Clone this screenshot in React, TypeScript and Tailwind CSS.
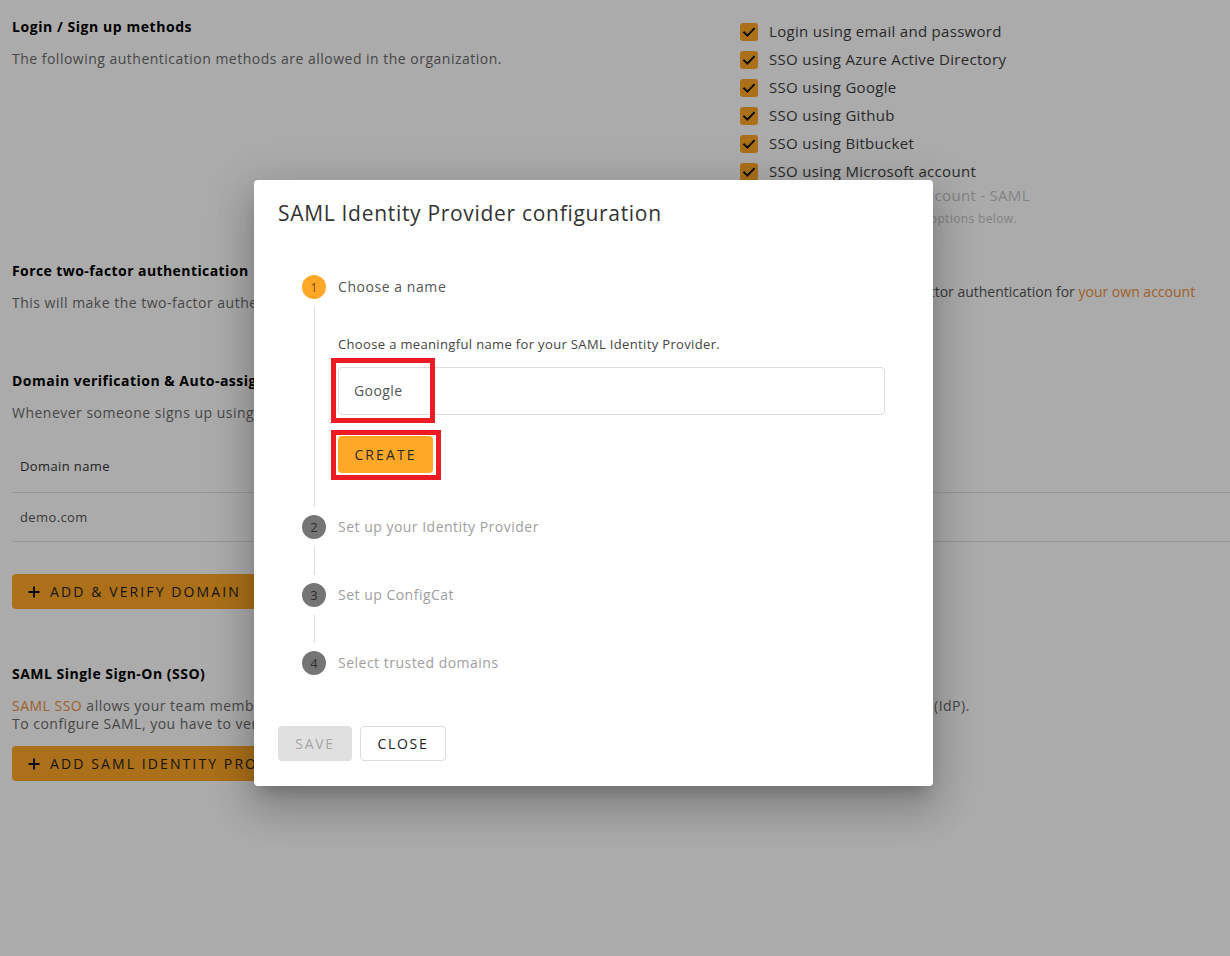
import React from "react";

const Check = () => (
  <span className="flex h-[18px] w-[18px] shrink-0 items-center justify-center rounded-[3px] bg-[#ffa726]">
    <svg viewBox="0 0 18 18" className="h-[18px] w-[18px]" fill="none">
      <path d="M4.2 9.4l3.2 3.2L13.9 5.8" stroke="#111" strokeWidth="2" strokeLinecap="square" />
    </svg>
  </span>
);

const Plus = () => (
  <svg viewBox="0 0 12 12" className="h-3 w-3" fill="none">
    <path d="M6 0.5v11M0.5 6h11" stroke="#111" strokeWidth="2" />
  </svg>
);

const methods = [
  "Login using email and password",
  "SSO using Azure Active Directory",
  "SSO using Google",
  "SSO using Github",
  "SSO using Bitbucket",
  "SSO using Microsoft account",
];

const StepCircle = ({ n, active }: { n: number; active?: boolean }) => (
  <span
    className={
      active
        ? "flex h-6 w-6 shrink-0 items-center justify-center rounded-full bg-[#ffa726] text-[13px] text-[#7a5012]"
        : "flex h-6 w-6 shrink-0 items-center justify-center rounded-full bg-[#757575] text-[13px] text-[#2e2e2e]"
    }
  >
    {n}
  </span>
);

export default function App() {
  return (
    <div className="relative min-h-[956px] w-full overflow-hidden bg-white font-['Open_Sans',sans-serif] text-sm">
      <div className="pl-3">
        {/* Section 1 */}
        <div className="flex">
          <div className="w-[728px] shrink-0 pt-[17px]">
            <h3 className="text-sm font-bold leading-5 tracking-[0.04em] text-black">Login / Sign up methods</h3>
            <p className="mt-3 leading-5 tracking-[0.035em] text-[#6b6b6b]">
              The following authentication methods are allowed in the organization.
            </p>
          </div>
          <div className="flex-1 pt-[18px]">
            {methods.map((m) => (
              <div key={m} className="flex h-7 items-center gap-[11px]">
                <Check />
                <span className="text-[15px] tracking-[0.02em] text-[#3d3d3d]">{m}</span>
              </div>
            ))}
            <div className="flex h-5 items-center gap-[11px]">
              <span className="h-[18px] w-[18px] shrink-0 rounded-[3px] border-2 border-[#c4c4c4]" />
              <span className="text-[15px] tracking-[0.02em] text-[#c4c4c4]">SSO using Microsoft account - SAML</span>
            </div>
            <p className="mt-[5px] text-xs leading-4 tracking-[0.03em] text-[#c4c4c4]">
              You can set it up with the SAML options below.
            </p>
          </div>
        </div>

        {/* Section 2 */}
        <div className="mt-[34px] flex">
          <div className="w-[728px] shrink-0">
            <h3 className="text-sm font-bold leading-5 tracking-[0.03em] text-black">Force two-factor authentication</h3>
            <p className="mt-3 leading-5 tracking-[0.035em] text-[#6b6b6b]">
              This will make the two-factor authentication mandatory for every member.
            </p>
          </div>
          <div className="flex-1 pt-[21px]">
            <p className="text-sm leading-5 text-[#555]">
              Don&apos;t forget to enable two-factor authentication for{" "}
              <span className="text-[#ee8f3e]">your own account</span>
            </p>
          </div>
        </div>

        {/* Section 3 */}
        <div className="mt-[58px]">
          <h3 className="text-sm font-bold leading-5 tracking-[0.035em] text-black">
            Domain verification &amp; Auto-assign users
          </h3>
          <p className="mt-3 leading-5 tracking-[0.035em] text-[#6b6b6b]">
            Whenever someone signs up using a verified domain, they will be added to the organization automatically.
          </p>
          <div className="mt-[18px]">
            <div className="flex h-[52px] items-center border-b border-[#e0e0e0] px-2 text-[13px] tracking-[0.03em] text-[#333]">
              Domain name
            </div>
            <div className="flex h-[49px] items-center border-b border-[#e0e0e0] px-2 text-[13px] tracking-[0.03em] text-[#555]">
              demo.com
            </div>
          </div>
          <button className="mt-8 inline-flex h-[35px] items-center gap-[10px] rounded-[4px] bg-[#ffa726] pl-4 pr-4 text-sm tracking-[0.15em] text-[#222]">
            <Plus />
            ADD &amp; VERIFY DOMAIN
          </button>
        </div>

        {/* Section 4 */}
        <div className="mt-[55px]">
          <h3 className="text-sm font-bold leading-5 tracking-[0.035em] text-black">SAML Single Sign-On (SSO)</h3>
          <p className="mt-[13px] leading-[18px] tracking-[0.035em] text-[#6b6b6b]">
            <span className="text-[#ee8f3e]">SAML SSO</span> allows your team members to log in to ConfigCat using a
            single set of credentials managed by your own Identity Provider (IdP).
            <br />
            To configure SAML, you have to verify at least one domain first.
          </p>
          <button className="mt-[13px] inline-flex h-[35px] items-center gap-[10px] rounded-[4px] bg-[#ffa726] pl-4 pr-4 text-sm tracking-[0.15em] text-[#222]">
            <Plus />
            ADD SAML IDENTITY PROVIDER
          </button>
        </div>
      </div>

      {/* Overlay */}
      <div className="absolute inset-0 bg-[rgba(0,0,0,0.33)]" />

      {/* Modal */}
      <div className="absolute left-[254px] top-[180px] w-[679px] rounded-[4px] bg-white px-6 pb-[25px] pt-[19px] shadow-[0_11px_15px_-7px_rgba(0,0,0,0.2),0_24px_38px_3px_rgba(0,0,0,0.14),0_9px_46px_8px_rgba(0,0,0,0.12)]">
        <h2 className="text-[21px] font-normal leading-7 tracking-[0.033em] text-[#333]">
          SAML Identity Provider configuration
        </h2>

        <div className="mt-12 px-6">
          {/* Step 1 */}
          <div className="flex h-6 items-center gap-3">
            <StepCircle n={1} active />
            <span className="text-sm tracking-[0.04em] text-[#555]">Choose a name</span>
          </div>
          <div className="ml-3 mt-2 border-l border-[#dcdcdc] pb-[34px] pl-[23px] pt-[28px]">
            <p className="text-[13px] leading-[18px] tracking-[0.027em] text-[#444]">
              Choose a meaningful name for your SAML Identity Provider.
            </p>
            <div className="relative mt-[14px]">
              <div className="flex h-12 items-center rounded-[4px] border border-[#dcdcdc] pl-[15px] text-sm tracking-[0.03em] text-[#555]">
                Google
              </div>
              <div className="absolute -left-[7px] -top-[9px] h-[65px] w-[104px] border-[5px] border-[#ed1c24]" />
            </div>
            <div className="relative mt-[21px] h-[37px] w-[95px]">
              <button className="flex h-[37px] w-[95px] items-center justify-center rounded-[4px] bg-[#ffa726] text-sm tracking-[0.15em] text-[#2a2a2a]">
                CREATE
              </button>
              <div className="absolute -left-[7px] -top-[6px] h-[50px] w-[110px] border-[5px] border-[#ed1c24]" />
            </div>
          </div>

          {/* Step 2 */}
          <div className="mt-2 flex h-6 items-center gap-3">
            <StepCircle n={2} />
            <span className="text-sm tracking-[0.035em] text-[#9e9e9e]">Set up your Identity Provider</span>
          </div>
          <div className="my-2 ml-3 h-7 border-l border-[#dcdcdc]" />
          {/* Step 3 */}
          <div className="flex h-6 items-center gap-3">
            <StepCircle n={3} />
            <span className="text-sm tracking-[0.035em] text-[#9e9e9e]">Set up ConfigCat</span>
          </div>
          <div className="my-2 ml-3 h-7 border-l border-[#dcdcdc]" />
          {/* Step 4 */}
          <div className="flex h-6 items-center gap-3">
            <StepCircle n={4} />
            <span className="text-sm tracking-[0.035em] text-[#9e9e9e]">Select trusted domains</span>
          </div>
        </div>

        <div className="mt-[51px] flex gap-2">
          <button className="flex h-[35px] w-[74px] items-center justify-center rounded-[4px] bg-[#e0e0e0] text-sm tracking-[0.12em] text-[#a6a6a6]">
            SAVE
          </button>
          <button className="flex h-[35px] w-[86px] items-center justify-center rounded-[4px] border border-[#dcdcdc] bg-white text-sm tracking-[0.12em] text-[#222]">
            CLOSE
          </button>
        </div>
      </div>
    </div>
  );
}
